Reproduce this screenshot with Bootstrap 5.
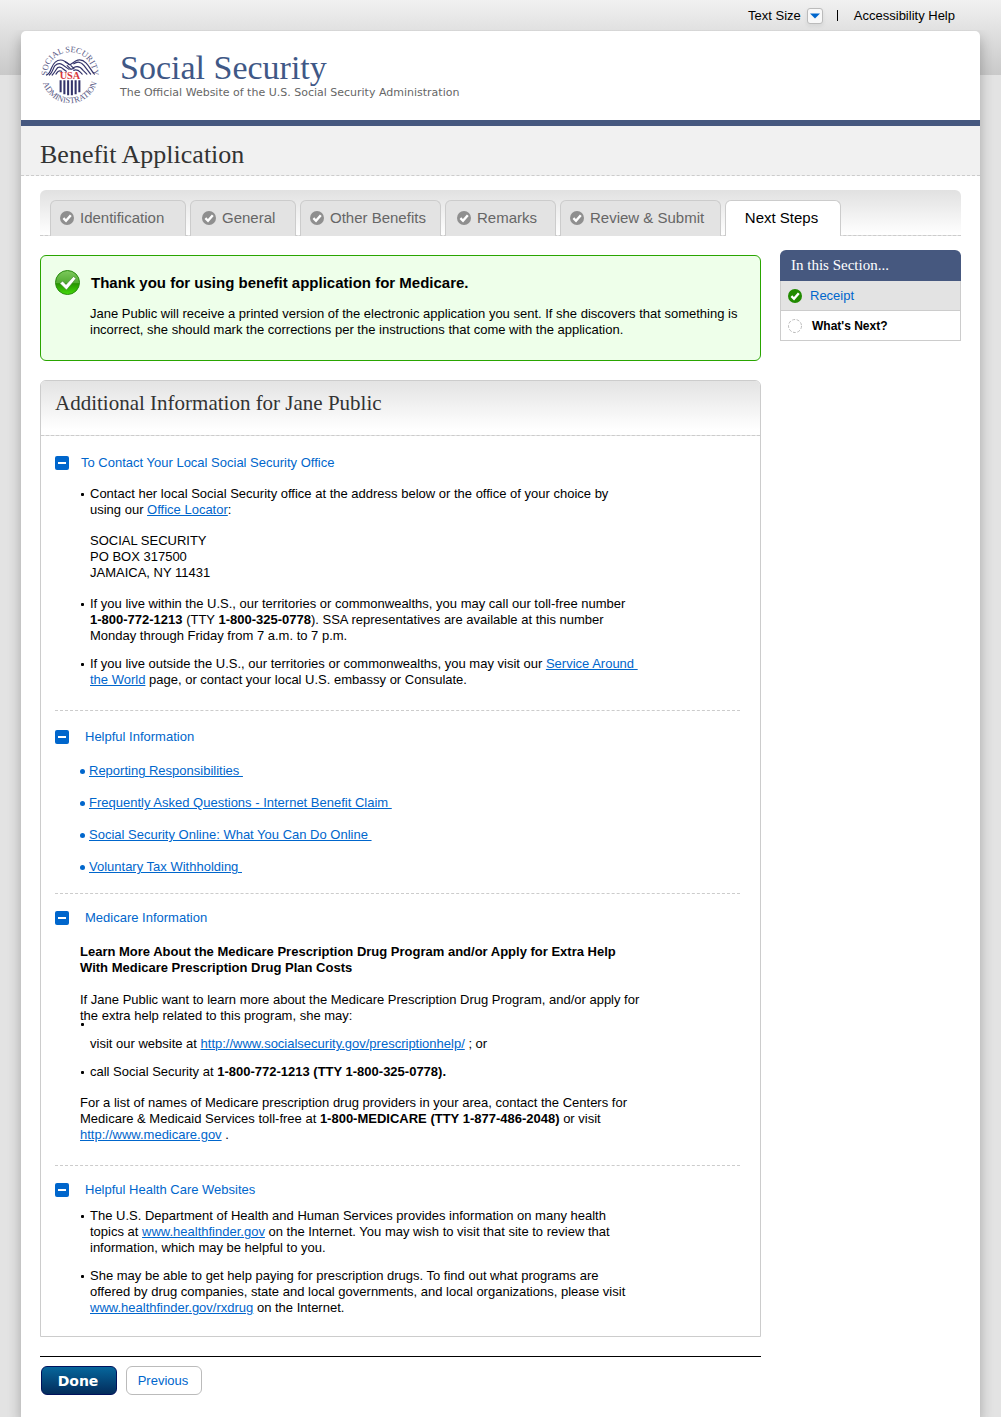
<!DOCTYPE html>
<html lang="en">
<head>
<meta charset="utf-8">
<meta name="viewport" content="width=device-width, initial-scale=1">
<title>Social Security - Benefit Application</title>
<link href="https://cdn.jsdelivr.net/npm/bootstrap@5.3.0/dist/css/bootstrap.min.css" rel="stylesheet">
<style>
  body { font-family: "Liberation Sans", Arial, sans-serif; font-size: 13px; line-height: 16px; color: #000; background: #fff; }
  a { color: #06c; }
  .serif { font-family: "Liberation Serif", "Times New Roman", serif; }
  .canvas { margin: 0 7px 12px 0; padding: 0 21px; background: linear-gradient(#f1f1f1, #c9c9c9) top / 100% 75px no-repeat #e3e3e3; }
  .util-bar { height: 31px; padding-right: 25px; }
  .util-bar a { color: #000; text-decoration: none; }
  .size-btn { width: 16px; height: 16px; padding: 0; margin: 0 14px 0 6px; border: 1px solid #bbb; border-radius: 3px; background: #f8f8f8; line-height: 0; }
  .sep { width: 1px; height: 11px; margin-right: 16px; background: #000; }
  .sheet { background: #fff; border-radius: 5px 5px 0 0; box-shadow: 0 6px 14px rgba(0,0,0,.28); clip-path: inset(-1px -14px 0 -14px); }
  .masthead { height: 95px; padding: 13px 19px 0; gap: 20px; border-bottom: 6px solid #46587f; }
  .brand { font-size: 34px; line-height: 38px; color: #3f5886; margin: 5px 0 0; font-weight: 400; }
  .tagline { font-family: "DejaVu Sans", Verdana, sans-serif; font-size: 11px; line-height: 12px; color: #666; margin: 0; }
  .seal { overflow: visible; }
  .app-title { height: 50px; padding: 10px 19px 0; background: #f1f1f1; border-bottom: 1px dashed #ccc; }
  .app-title h1 { font-size: 26px; line-height: 38px; margin: 0; color: #333; }
  .main-area { padding: 14px 19px 22px; }
  .tabs { height: 46px; padding: 10px 10px 0; gap: 4px; border-radius: 6px 6px 0 0; border-bottom: 1px dashed #ccc; background: linear-gradient(#e1e1e1, #fff); }
  .step { display: flex; align-items: center; gap: 6px; height: 36px; padding: 0 9px 2px; border: 1px solid #ccc; border-bottom: 0; border-radius: 6px 6px 0 0; background: #e3e3e3; color: #666; font-size: 15px; text-decoration: none; white-space: nowrap; }
  .step-current { justify-content: center; background: #fff; color: #000; padding-right: 12px; }
  .w-a { width: 136px; } .w-b { width: 106px; } .w-c { width: 141px; } .w-d { width: 111px; } .w-e { width: 161px; } .w-f { width: 116px; }
  .inset { padding-left: 11px; }
  .columns { gap: 19px; }
  .content-col { flex: 1 1 0; min-width: 0; padding-top: 19px; }
  .side-col { flex: 0 0 181px; padding-top: 14px; }
  .notice { min-height: 106px; padding: 14px; gap: 9px; border: 1px solid #29a500; border-radius: 6px; background: #eeffea; }
  .notice h2 { font-size: 15px; line-height: 20px; font-weight: 700; margin: 3px 0 13px 1px; }
  .panel { margin-top: 19px; border: 1px solid #ccc; border-radius: 6px 6px 0 0; padding-bottom: 20px; }
  .panel-title { height: 55px; padding: 10px 14px 0; border-bottom: 1px dashed #ccc; background: linear-gradient(#e3e3e3, #fff 90%); border-radius: 5px 5px 0 0; }
  .panel-title h2 { font-size: 21px; line-height: 24px; margin: 0; color: #333; }
  .topic { margin: 0 20px 0 14px; padding-top: 16px; }
  .topic-first { padding-top: 19px; }
  .topic-roomy { padding-top: 18px; }
  .topic-end { padding-bottom: 22px; }
  .topic + .topic { border-top: 1px dashed #ccc; }
  .toggle { display: flex; align-items: center; gap: 16px; padding: 0; border: 0; background: none; color: #06c; line-height: 16px; }
  .toggle-near { gap: 12px; }
  .toggle svg { display: block; }
  .topic-body { padding-left: 25px; }
  .dots { list-style: none; margin: 0; padding: 0; }
  .dots li { position: relative; padding-left: 10px; }
  .dots li::before { content: ""; position: absolute; left: 1px; top: 7px; width: 3px; height: 3px; border-radius: 1px; background: #000; }
  .dots-blue { padding: 18px 0 2px; }
  .dots-blue li { padding-left: 9px; margin-bottom: 16px; color: #06c; }
  .dots-blue li::before { left: 0; top: 6px; width: 5px; height: 5px; border-radius: 50%; background: #06c; }
  .dots .raised::before { top: -13px; }
  .actions { margin-top: 19px; padding: 9px 1px 0; gap: 9px; border-top: 1px solid #000; }
  .act { width: 76px; height: 29px; padding: 0 2px 0 0; border-radius: 6px; font-size: 13px; line-height: 26px; color: #06c; background: #fff; border: 1px solid #bbb; }
  .act-main { font-family: "DejaVu Sans", Verdana, sans-serif; font-size: 14px; font-weight: 700; color: #fff; background: linear-gradient(#06669c, #032c5b); border-color: #00125c; }
  .side-head { font-size: 15px; line-height: 31px; padding-left: 11px; margin: 0; background: #46587f; color: #fff; border-radius: 6px 6px 0 0; }
  .side-list { list-style: none; margin: 0; padding: 0; border: 1px solid #ccc; border-top: 0; }
  .side-list li { display: flex; align-items: center; height: 29px; padding-left: 7px; gap: 8px; }
  .side-list .visited-row { background: #e3e3e3; }
  .side-list li + li { height: 30px; gap: 10px; font-size: 12px; border-top: 1px solid #ccc; }
  .side-list a { text-decoration: none; }
  .gap-s { margin-top: 10px; } .gap-m { margin-top: 12px; } .gap-l { margin-top: 15px; }
  .lead-in { padding-top: 18px; }
</style>
<script src="https://cdn.jsdelivr.net/npm/bootstrap@5.3.0/dist/js/bootstrap.bundle.min.js"></script>
</head>
<body>
<svg width="0" height="0" class="d-none" aria-hidden="true">
  <symbol id="tick" viewBox="0 0 14 14"><circle cx="7" cy="7" r="7" fill="currentColor"/><path d="M3.400 7.200 6 9.800 10.800 4.200" fill="none" stroke="#fff" stroke-width="2.400"/></symbol>
  <symbol id="minus" viewBox="0 0 14 14"><rect width="14" height="14" rx="2" fill="#06c"/><path d="M3 7h8" stroke="#fff" stroke-width="2"/></symbol>
</svg>
<div class="canvas">
  <nav class="util-bar d-flex align-items-center justify-content-end" aria-label="Utilities">
    <label for="textSize">Text Size</label>
    <button id="textSize" type="button" class="size-btn shadow-sm" aria-label="Text Size"><svg width="10" height="6" viewBox="0 0 10 6"><path d="M0 .5h10L5 5.500z" fill="#06c"/></svg></button>
    <span class="sep"></span>
    <a href="#">Accessibility Help</a>
  </nav>
  <div class="sheet">
    <header class="masthead d-flex">
      <svg class="seal flex-shrink-0" width="60" height="62" viewBox="-2 -1 64 64" role="img" aria-label="Social Security Administration seal">
        <path id="arcTop" d="M6 36A24.500 24.500 0 1 1 54 36" fill="none"/>
        <path id="arcLow" d="M0 31A30 30 0 0 0 60 31" fill="none"/>
        <g class="serif" fill="#5a5a86" font-size="9">
          <text text-anchor="middle"><textPath href="#arcTop" startOffset="50%">SOCIAL SECURITY</textPath></text>
          <text text-anchor="middle"><textPath href="#arcLow" startOffset="50%">ADMINISTRATION</textPath></text>
        </g>
        <g fill="none" stroke="#34346b" stroke-width="1.300" stroke-linecap="round">
          <path d="M5 31c3-1 4-4 5-7 2-5 5-9 10-9 4 0 6 2 9 5"/>
          <path d="M8 31c4-3 4-8 6-10 3-3 5-3 8-1l7 5"/>
          <path d="M11 31c3-3 4-6 6-8 2-1 4 0 5 1l4 3"/>
          <path d="M15 30c2-3 3-4 6-3"/>
          <path d="M25 17l5 3 6-4c4-2 8-1 11 2 4 4 5 8 9 12"/>
          <path d="M27 21l4 4 3-1-3-3M34 19c4-3 8-2 11 2l7 9M34 23c4-2 7-1 10 3l4 4M34 26c3-1 5 0 7 2l2 2"/>
        </g>
        <text class="serif" x="30" y="35" text-anchor="middle" font-size="11" font-weight="700" fill="#d8383c">USA</text>
        <path d="M20 36.500v13M24 36.500v15M28 36.500v16M32 36.500v16M36 36.500v15M40 36.500v13" stroke="#34346b" stroke-width="2.200"/>
      </svg>
      <div>
        <div class="brand serif">Social Security</div>
        <p class="tagline">The Official Website of the U.S. Social Security Administration</p>
      </div>
    </header>
    <div class="app-title"><h1 class="serif fw-normal">Benefit Application</h1></div>
    <main class="main-area">
      <nav class="tabs d-flex" aria-label="Steps">
        <a href="#" class="step w-a"><svg width="14" height="14" color="#8f8f8f"><use href="#tick"/></svg>Identification</a>
        <a href="#" class="step w-b inset"><svg width="14" height="14" color="#8f8f8f"><use href="#tick"/></svg>General</a>
        <a href="#" class="step w-c"><svg width="14" height="14" color="#8f8f8f"><use href="#tick"/></svg>Other Benefits</a>
        <a href="#" class="step w-d inset"><svg width="14" height="14" color="#8f8f8f"><use href="#tick"/></svg>Remarks</a>
        <a href="#" class="step w-e"><svg width="14" height="14" color="#8f8f8f"><use href="#tick"/></svg>Review &amp; Submit</a>
        <a href="#" class="step step-current w-f" aria-current="step">Next Steps</a>
      </nav>
      <div class="columns d-flex align-items-start">
        <div class="content-col">
          <section class="notice d-flex align-items-start">
            <svg class="flex-shrink-0" width="26" height="26" viewBox="0 0 26 26" aria-hidden="true">
              <defs><linearGradient id="gr" x2="0" y2="1"><stop offset="0" stop-color="#7cc95c"/><stop offset=".5" stop-color="#55ad35"/><stop offset=".55" stop-color="#279400"/><stop offset="1" stop-color="#43dc0a"/></linearGradient></defs>
              <circle cx="12.500" cy="12.500" r="12" fill="url(#gr)" stroke="#2a8c10"/>
              <path d="M5 13.500 7.500 11l3.500 3.500L18.500 6.500l2.500 2L11.500 20z" fill="#fff" stroke="#3b7c28" stroke-width=".6"/>
            </svg>
            <div>
              <h2>Thank you for using benefit application for Medicare.</h2>
              <p class="m-0">Jane Public will receive a printed version of the electronic application you sent. If she discovers that something is incorrect, she should mark the corrections per the instructions that come with the application.</p>
            </div>
          </section>

          <section class="panel">
            <div class="panel-title"><h2 class="serif fw-normal">Additional Information for Jane Public</h2></div>

            <div class="topic topic-first topic-end">
              <button type="button" class="toggle toggle-near" data-bs-toggle="collapse" data-bs-target="#office" aria-expanded="true"><svg width="14" height="14"><use href="#minus"/></svg>To Contact Your Local Social Security Office</button>
              <div id="office" class="collapse show"><div class="topic-body">
                <ul class="dots">
                  <li class="gap-l">Contact her local Social Security office at the address below or the office of your choice by<br>using our <a href="#">Office Locator</a>:
                    <address class="gap-l mb-0">SOCIAL SECURITY<br>PO BOX 317500<br>JAMAICA, NY 11431</address></li>
                  <li class="gap-l">If you live within the U.S., our territories or commonwealths, you may call our toll-free number<br><b>1-800-772-1213</b> (TTY <b>1-800-325-0778</b>). SSA representatives are available at this number<br>Monday through Friday from 7 a.m. to 7 p.m.</li>
                  <li class="gap-m">If you live outside the U.S., our territories or commonwealths, you may visit our <a href="#">Service Around&nbsp;<br>the World</a> page, or contact your local U.S. embassy or Consulate.</li>
                </ul>
              </div></div>
            </div>

            <div class="topic topic-roomy">
              <button type="button" class="toggle" data-bs-toggle="collapse" data-bs-target="#helpful" aria-expanded="true"><svg width="14" height="14"><use href="#minus"/></svg>Helpful Information</button>
              <div id="helpful" class="collapse show"><div class="topic-body">
                <ul class="dots dots-blue">
                  <li><a href="#">Reporting Responsibilities&nbsp;</a></li>
                  <li><a href="#">Frequently Asked Questions - Internet Benefit Claim&nbsp;</a></li>
                  <li><a href="#">Social Security Online: What You Can Do Online&nbsp;</a></li>
                  <li><a href="#">Voluntary Tax Withholding&nbsp;</a></li>
                </ul>
              </div></div>
            </div>

            <div class="topic topic-end">
              <button type="button" class="toggle" data-bs-toggle="collapse" data-bs-target="#medicare" aria-expanded="true"><svg width="14" height="14"><use href="#minus"/></svg>Medicare Information</button>
              <div id="medicare" class="collapse show"><div class="topic-body lead-in">
                <p class="fw-bold mb-3">Learn More About the Medicare Prescription Drug Program and/or Apply for Extra Help<br>With Medicare Prescription Drug Plan Costs</p>
                <p class="mb-0">If Jane Public want to learn more about the Medicare Prescription Drug Program, and/or apply for<br>the extra help related to this program, she may:</p>
                <ul class="dots">
                  <li class="raised gap-m">visit our website at <a href="#">http://www.socialsecurity.gov/prescriptionhelp/</a> ; or</li>
                  <li class="gap-m">call Social Security at <b>1-800-772-1213 (TTY 1-800-325-0778).</b></li>
                </ul>
                <p class="gap-l mb-0">For a list of names of Medicare prescription drug providers in your area, contact the Centers for<br>Medicare &amp; Medicaid Services toll-free at <b>1-800-MEDICARE (TTY 1-877-486-2048)</b> or visit<br><a href="#">http://www.medicare.gov</a> .</p>
              </div></div>
            </div>

            <div class="topic">
              <button type="button" class="toggle" data-bs-toggle="collapse" data-bs-target="#sites" aria-expanded="true"><svg width="14" height="14"><use href="#minus"/></svg>Helpful Health Care Websites</button>
              <div id="sites" class="collapse show"><div class="topic-body">
                <ul class="dots">
                  <li class="gap-s">The U.S. Department of Health and Human Services provides information on many health<br>topics at <a href="#">www.healthfinder.gov</a> on the Internet. You may wish to visit that site to review that<br>information, which may be helpful to you.</li>
                  <li class="gap-m">She may be able to get help paying for prescription drugs. To find out what programs are<br>offered by drug companies, state and local governments, and local organizations, please visit<br><a href="#">www.healthfinder.gov/rxdrug</a> on the Internet.</li>
                </ul>
              </div></div>
            </div>
          </section>

          <div class="actions d-flex">
            <button type="button" class="act act-main">Done</button>
            <button type="button" class="act">Previous</button>
          </div>
        </div>
        <aside class="side-col">
          <h2 class="side-head serif fw-normal">In this Section...</h2>
          <ul class="side-list">
            <li class="visited-row"><svg width="14" height="14" color="#218a00"><use href="#tick"/></svg><a href="#">Receipt</a></li>
            <li><svg width="14" height="14" viewBox="0 0 14 14" aria-hidden="true"><circle cx="7" cy="7" r="6.500" fill="none" stroke="#bbb" stroke-dasharray="3 1.500"/></svg><b>What's Next?</b></li>
          </ul>
        </aside>
      </div>
    </main>
  </div>
</div>
</body>
</html>
